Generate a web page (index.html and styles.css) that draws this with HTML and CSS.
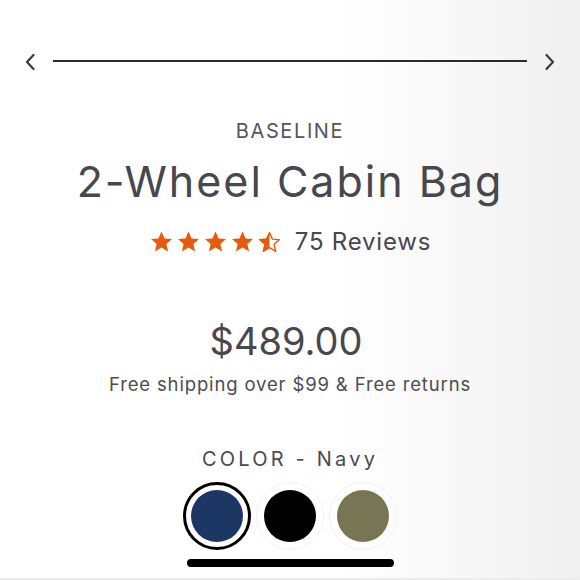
FILE: index.html
```html
<!DOCTYPE html>
<html lang="en">
<head>
<meta charset="utf-8">
<link rel="stylesheet" href="styles.css">
</head>
<body>
<div class="page">
  <div class="nav">
    <svg class="chev" width="12" height="18" viewBox="0 0 12 18"><path d="M9.5 2 L3 9 L9.5 16" fill="none" stroke="#3a3a3e" stroke-width="2.2" stroke-linecap="round" stroke-linejoin="round"/></svg>
    <div class="track"></div>
    <svg class="chev" width="12" height="18" viewBox="0 0 12 18"><path d="M2.5 2 L9 9 L2.5 16" fill="none" stroke="#3a3a3e" stroke-width="2.2" stroke-linecap="round" stroke-linejoin="round"/></svg>
  </div>
  <div class="brand">BASELINE</div>
  <h1 class="title">2-Wheel Cabin Bag</h1>
  <div class="rating">
    <div class="stars">
      <svg width="25" height="24" viewBox="0 0 24 24"><path d="M12 1.5l3.1 7 7.4.6-5.6 4.9 1.7 7.4L12 17.5l-6.6 3.9 1.7-7.4L1.5 9.1l7.4-.6z" fill="#e65a0c"/></svg>
      <svg width="25" height="24" viewBox="0 0 24 24"><path d="M12 1.5l3.1 7 7.4.6-5.6 4.9 1.7 7.4L12 17.5l-6.6 3.9 1.7-7.4L1.5 9.1l7.4-.6z" fill="#e65a0c"/></svg>
      <svg width="25" height="24" viewBox="0 0 24 24"><path d="M12 1.5l3.1 7 7.4.6-5.6 4.9 1.7 7.4L12 17.5l-6.6 3.9 1.7-7.4L1.5 9.1l7.4-.6z" fill="#e65a0c"/></svg>
      <svg width="25" height="24" viewBox="0 0 24 24"><path d="M12 1.5l3.1 7 7.4.6-5.6 4.9 1.7 7.4L12 17.5l-6.6 3.9 1.7-7.4L1.5 9.1l7.4-.6z" fill="#e65a0c"/></svg>
      <svg width="25" height="24" viewBox="0 0 24 24"><path d="M12 2.5l2.9 6.6 7 .6-5.3 4.6 1.6 7L12 17.6l-6.2 3.7 1.6-7-5.3-4.6 7-.6z" fill="none" stroke="#e65a0c" stroke-width="1.4" stroke-linejoin="round"/><path d="M12 1.5v16L5.4 21.4l1.7-7.4L1.5 9.1l7.4-.6z" fill="#e65a0c"/></svg>
    </div>
    <span class="reviews">75 Reviews</span>
  </div>
  <div class="price">$489.00</div>
  <div class="shipping">Free shipping over $99 &amp; Free returns</div>
  <div class="color-label">COLOR - Navy</div>
  <div class="swatches">
    <div class="swatch selected"><span class="dot navy"></span></div>
    <div class="swatch"><span class="dot black"></span></div>
    <div class="swatch"><span class="dot olive"></span></div>
  </div>
  <div class="home-bar"></div>
</div>
</body>
</html>
```
FILE: styles.css
```css
html, body {
  margin: 0;
  padding: 0;
}
body {
  width: 580px;
  height: 580px;
  overflow: hidden;
  font-family: Inter, "Open Sans", sans-serif;
  color: #47474d;
  background: linear-gradient(to right, #ffffff 0%, #ffffff 58%, #f0f0f0 100%);
}
.page {
  height: 578px;
  border-bottom: 2px solid #ececec;
  display: flex;
  flex-direction: column;
  align-items: center;
}
.nav {
  width: 100%;
  box-sizing: border-box;
  padding: 0 24px 0 24px;
  margin-top: 53px;
  display: flex;
  align-items: center;
  gap: 17px;
}
.chev { display: block; flex: none; }
.track {
  flex: 1;
  height: 2px;
  background: #2b2b2e;
  margin-top: -2px;
}
.brand {
  margin-top: 48px;
  font-size: 20px;
  line-height: 24px;
  letter-spacing: 1.6px;
  color: #55555a;
}
.title {
  margin: 13px 0 0;
  font-weight: 400;
  font-size: 43px;
  line-height: 50px;
  letter-spacing: 2px;
  color: #47474d;
}
.rating {
  margin-top: 22px;
  display: flex;
  align-items: center;
  gap: 13px;
}
.stars {
  display: flex;
  gap: 2px;
}
.stars svg { display: block; }
.reviews {
  font-size: 24px;
  line-height: 28px;
  letter-spacing: 0.8px;
}
.price {
  margin-top: 63px;
  margin-right: 8px;
  font-size: 38px;
  line-height: 44px;
}
.shipping {
  margin-top: 9px;
  font-size: 18.5px;
  line-height: 24px;
  letter-spacing: 0.85px;
  color: #4d4d52;
}
.color-label {
  margin-top: 50px;
  font-size: 20px;
  line-height: 26px;
  letter-spacing: 3.2px;
  color: #4a4a4f;
}
.swatches {
  margin-top: 10px;
  display: flex;
  gap: 5px;
}
.swatch {
  width: 68px;
  height: 68px;
  box-sizing: border-box;
  border-radius: 50%;
  display: flex;
  align-items: center;
  justify-content: center;
  border: 1px solid #f2f2f2;
}
.swatch.selected {
  border: 3px solid #000;
}
.dot {
  width: 52px;
  height: 52px;
  border-radius: 50%;
}
.navy { background: #1c3764; }
.black { background: #000; }
.olive { background: #777554; }
.home-bar {
  margin-top: 9px;
  width: 207px;
  height: 8px;
  border-radius: 4px;
  background: #000;
}
```
